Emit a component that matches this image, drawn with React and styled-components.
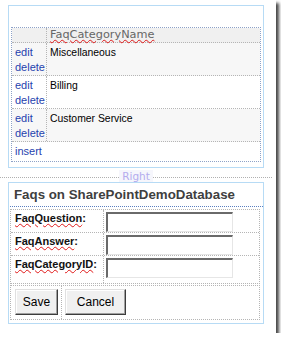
import React from "react";
import styled, { createGlobalStyle } from "styled-components";

const GlobalStyle = createGlobalStyle`
  html, body { margin: 0; padding: 0; background: #fff; }
  body { font-family: "Liberation Sans", Arial, sans-serif; }
  * { box-sizing: border-box; }
`;

const Page = styled.div`
  width: 276px;
  height: 333px;
  background: #fff;
  box-shadow: 3px 3px 3px rgba(0, 0, 0, 0.72);
  padding-top: 5px;
  display: flex;
  flex-direction: column;
`;

const Panel = styled.div`
  margin-left: 8px;
  width: 256px;
  border: 1px solid #b7dbf5;
  padding: ${(p) => p.$pad};
`;

const Grid = styled.div`
  width: 250px;
  border: 1px dotted #8ea2c8;
`;

const GridRow = styled.div`
  display: flex;
  height: ${(p) => p.$h}px;
  background: ${(p) => p.$bg || "#fff"};
  border-bottom: 1px dotted #b5b5b5;
  &:last-child { border-bottom: none; }
`;

const CmdCell = styled.div`
  width: 35px;
  border-right: ${(p) => (p.$noDivider ? "none" : "1px dotted #b5b5b5")};
  padding: 2px 0 0 3px;
  display: flex;
  flex-direction: column;
`;

const DataCell = styled.div`
  flex: 1;
  padding: 2px 0 0 3px;
  font-size: 10.4px;
  line-height: 15px;
  color: #000;
`;

const HeaderCell = styled.div`
  flex: 1;
  padding-left: 3px;
  font-family: "DejaVu Sans", Verdana, sans-serif;
  font-size: 11.3px;
  line-height: 14px;
  color: #666;
`;

const Link = styled.span`
  font-size: 11px;
  line-height: 15px;
  color: #1f3fae;
`;

const Spell = styled.span`
  text-decoration: underline wavy #e01818;
  text-decoration-thickness: 1px;
  text-underline-offset: 1px;
`;

const Separator = styled.div`
  width: 272px;
  height: 14px;
  display: flex;
  align-items: flex-start;
`;

const SepLine = styled.div`
  flex: 1;
  margin-top: 9px;
  border-top: 1px dotted #b0b0b0;
`;

const SepLabel = styled.div`
  margin-top: 2px;
  padding: 0 3px;
  background: #f6f6fc;
  font-family: "DejaVu Sans", Verdana, sans-serif;
  font-size: 10.5px;
  line-height: 12px;
  color: #b3abee;
`;

const Title = styled.div`
  margin-left: 1px;
  height: 24px;
  border-bottom: 1px dotted #5a7fc0;
  padding-left: 4px;
  font-weight: bold;
  font-size: 13.3px;
  line-height: 23px;
  color: #3f3f3f;
`;

const FormTable = styled.div`
  margin: ${(p) => p.$mt}px 0 0 1px;
  width: 250px;
  border: 1px dotted #b5b5b5;
`;

const FormRow = styled.div`
  display: flex;
  height: ${(p) => p.$h}px;
  border-bottom: 1px dotted #b5b5b5;
  &:last-child { border-bottom: none; }
`;

const LabelCell = styled.div`
  width: 93px;
  border-right: 1px dotted #b5b5b5;
  padding: 2px 0 0 4px;
  font-weight: bold;
  font-size: 11px;
  line-height: 13px;
  color: #111;
`;

const InputCell = styled.div`
  flex: 1;
  padding: 2px 0 0 2px;
`;

const TextBox = styled.div`
  width: 127px;
  height: 20px;
  background: #fff;
  border-top: 2px solid #6a6a6a;
  border-left: 2px solid #6a6a6a;
  border-right: 1px solid #e6e6e6;
  border-bottom: 1px solid #e6e6e6;
`;

const ButtonCell = styled.div`
  width: ${(p) => p.$w || "auto"};
  border-right: ${(p) => (p.$divider ? "1px dotted #b5b5b5" : "none")};
  padding: 3px 0 0 ${(p) => p.$pl}px;
`;

const Button = styled.button`
  width: ${(p) => p.$w}px;
  height: 26px;
  padding: 0;
  font-family: "Liberation Sans", Arial, sans-serif;
  font-size: 12px;
  color: #000;
  background: #f0f0f0;
  border: 1px solid;
  border-color: #e0e0e0 #3c3c3c #3c3c3c #e0e0e0;
  box-shadow: inset -1px -1px #a0a0a0, inset 1px 1px #fff;
`;

const rows = [
  { name: "Miscellaneous", bg: "#f7f7f7" },
  { name: "Billing", bg: "#fff" },
  { name: "Customer Service", bg: "#f7f7f7" },
];

const fields = [
  { label: "FaqQuestion", h: 23 },
  { label: "FaqAnswer", h: 23 },
  { label: "FaqCategoryID", h: 27 },
];

export default function App() {
  return (
    <>
      <GlobalStyle />
      <Page>
        <Panel $pad="21px 2px 5px 2px">
          <Grid>
            <GridRow $h={15} $bg="#f0f0f0">
              <CmdCell />
              <HeaderCell>
                <Spell>FaqCategoryName</Spell>
              </HeaderCell>
            </GridRow>
            {rows.map((r) => (
              <GridRow key={r.name} $h={33} $bg={r.bg}>
                <CmdCell>
                  <Link>edit</Link>
                  <Link>delete</Link>
                </CmdCell>
                <DataCell>{r.name}</DataCell>
              </GridRow>
            ))}
            <GridRow $h={19}>
              <CmdCell $noDivider>
                <Link>insert</Link>
              </CmdCell>
            </GridRow>
          </Grid>
        </Panel>
        <Separator>
          <SepLine />
          <SepLabel>Right</SepLabel>
          <SepLine />
        </Separator>
        <Panel $pad="0 0 3px 0">
          <Title>Faqs on SharePointDemoDatabase</Title>
          <FormTable $mt={2}>
            {fields.map((f) => (
              <FormRow key={f.label} $h={f.h}>
                <LabelCell>
                  <Spell>{f.label}</Spell>:
                </LabelCell>
                <InputCell>
                  <TextBox />
                </InputCell>
              </FormRow>
            ))}
          </FormTable>
          <FormTable $mt={1}>
            <FormRow $h={33}>
              <ButtonCell $w="51px" $divider $pl={4}>
                <Button $w={43}>Save</Button>
              </ButtonCell>
              <ButtonCell $pl={3}>
                <Button $w={61}>Cancel</Button>
              </ButtonCell>
            </FormRow>
          </FormTable>
        </Panel>
      </Page>
    </>
  );
}
